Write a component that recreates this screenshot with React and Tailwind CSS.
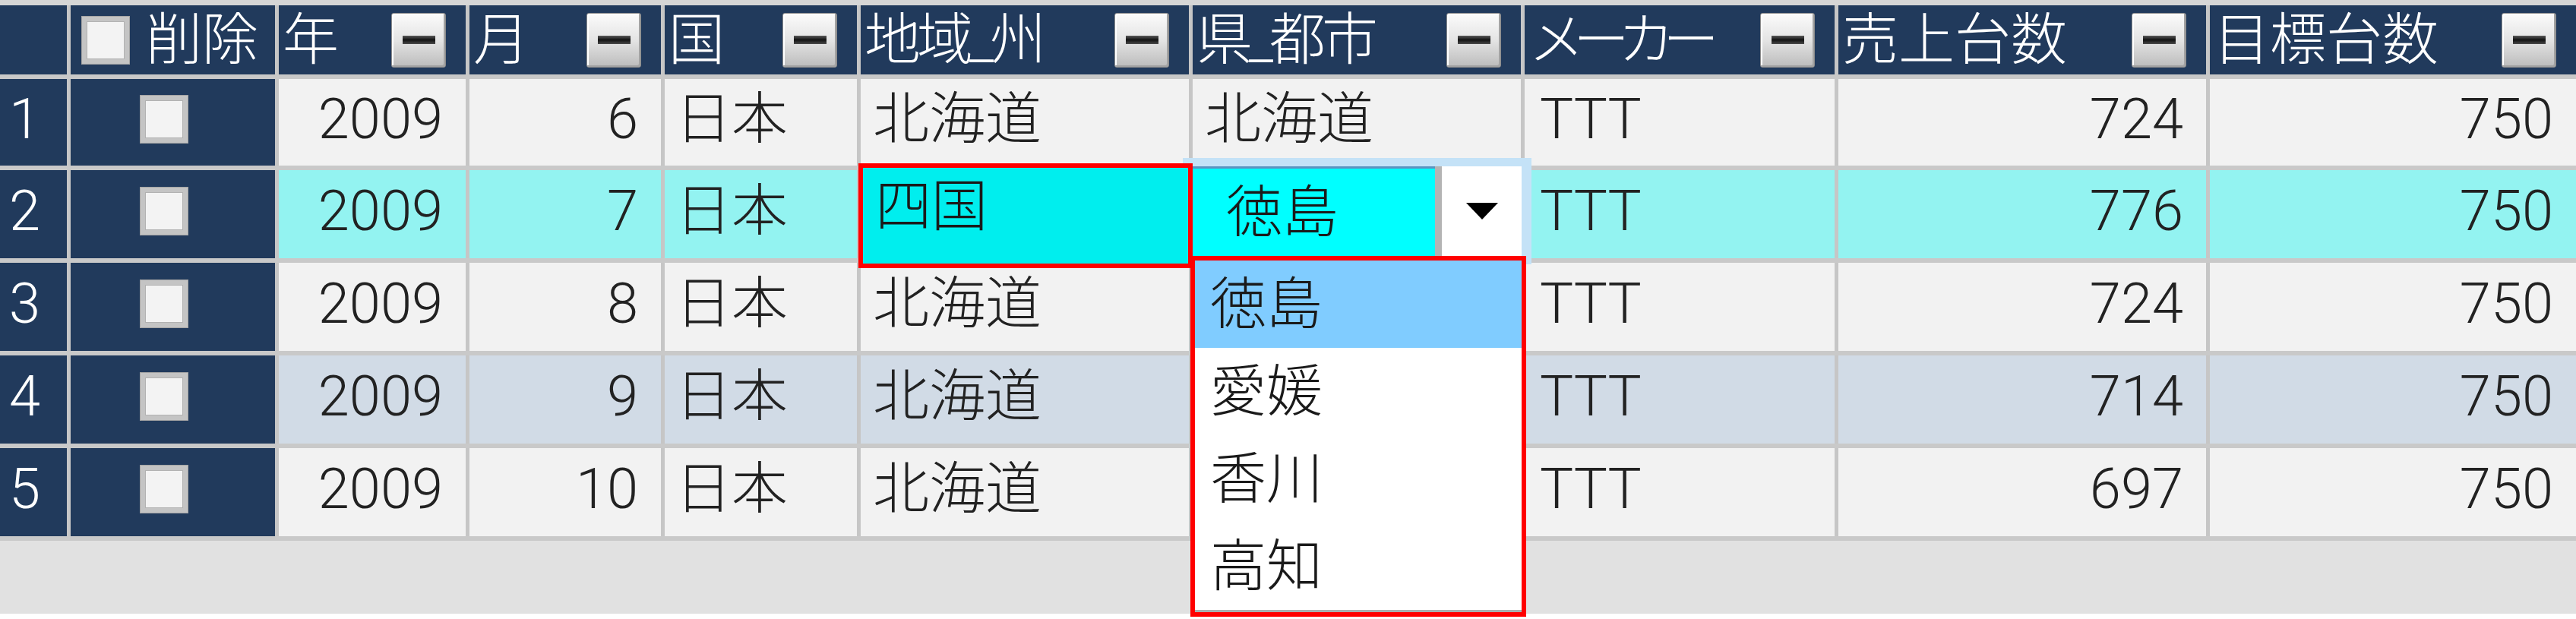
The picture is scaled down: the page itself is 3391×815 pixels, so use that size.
const W = [
  "w-[93px]",
  "w-[274px]",
  "w-[251px]",
  "w-[257px]",
  "w-[258px]",
  "w-[437px]",
  "w-[437px]",
  "w-[413px]",
  "w-[489px]",
  "flex-1",
];

const rows = [
  { n: 1, m: 6, region: "北海道", city: "北海道", sales: 724, bg: "bg-[#f2f2f2]", h: "h-[120px]" },
  { n: 2, m: 7, region: "", city: "", sales: 776, bg: "bg-[#93f3f1]", h: "h-[122px]", editing: true },
  { n: 3, m: 8, region: "北海道", city: "", sales: 724, bg: "bg-[#f2f2f2]", h: "h-[122px]" },
  { n: 4, m: 9, region: "北海道", city: "", sales: 714, bg: "bg-[#d1dbe6]", h: "h-[122px]" },
  { n: 5, m: 10, region: "北海道", city: "", sales: 697, bg: "bg-[#f2f2f2]", h: "h-[122px]" },
];

const headers = ["年", "月", "国", "地域_州", "県_都市", "メーカー", "売上台数", "目標台数"];

const options = ["徳島", "愛媛", "香川", "高知"];

function Checkbox() {
  return (
    <div className="w-[62px] h-[62px] shrink-0 bg-[#f3f3f3] border-[6px] border-[#c4c4c4] shadow-[0_0_0_1px_#a4a4a4,inset_0_0_0_1px_#b2b2b2]" />
  );
}

function FilterButton() {
  return (
    <div className="w-[72px] h-[72px] shrink-0 rounded-[3px] border border-[#8c8c8c] bg-linear-to-b from-[#fbfbfb] via-[#e4e4e4] to-[#bcbcbc] shadow-[inset_-2px_-2px_0_#a3a3a3,inset_2px_2px_0_#ffffff] flex items-center justify-center">
      <div className="w-[43px] h-[11px] bg-linear-to-b from-[#5a5a5a] via-[#141414] to-[#4a4a4a]" />
    </div>
  );
}

function HeaderCell({ w, label, last }) {
  return (
    <div
      className={`${w} h-full flex items-center justify-between pl-[5px] pr-[26px] ${last ? "" : "border-r-[5px] border-[#c6c6c6]"}`}
    >
      <span className={label === "メーカー" ? "tracking-[-15px]" : label.includes("_") ? "tracking-[-5px]" : ""}>
        {label}
      </span>
      <FilterButton />
    </div>
  );
}

function Cell({ w, align = "left", last, children, extra = "" }) {
  return (
    <div
      className={`${w} h-full flex items-center pb-[8px] ${align === "right" ? "justify-end pr-[30px]" : "justify-start pl-[16px]"} ${last ? "" : "border-r-[5px] border-[#c6c6c6]"} ${extra}`}
    >
      {children}
    </div>
  );
}

function RegionEditor() {
  return (
    <div className="absolute left-[-3px] top-[-9px] w-[440px] h-[138px] border-[6px] border-[#ff0000] bg-[#00eeee] z-20 pl-[16px] pt-[14px] leading-none text-[#1a1a1a]">
      四国
    </div>
  );
}

function CityEditor() {
  return (
    <>
      <div className="absolute left-[-13px] top-[-16px] w-[459px] h-[140px] bg-[#c4e2f7] z-10 p-[11px_13px] flex">
        <div className="w-[319px] h-full bg-[#00ffff] border-t-[3px] border-[#5c93c0] flex items-center pl-[44px] leading-none text-[#1a1a1a]">
          徳島
        </div>
        <div className="w-[9px] h-full bg-[#b4b4b4]" />
        <div className="flex-1 h-full bg-white flex items-center justify-center">
          <svg width="42" height="22" viewBox="0 0 42 22">
            <polygon points="0,0 42,0 21,22" fill="#000" />
          </svg>
        </div>
      </div>
      <div className="absolute left-[-3px] top-[113px] w-[442px] border-[6px] border-[#ff0000] bg-white z-30 leading-none text-[#1a1a1a]">
        <div className="border-b-[3px] border-[#a9b1b1]">
          {options.map((o, i) => (
            <div
              key={o}
              className={`h-[115px] flex items-center pl-[20px] ${i === 0 ? "bg-[#80ccff]" : "bg-white"}`}
            >
              {o}
            </div>
          ))}
        </div>
      </div>
    </>
  );
}

export default function App() {
  return (
    <div className="w-[3391px] h-[815px] bg-white font-['Roboto','Noto_Sans_CJK_JP',sans-serif] font-light text-[74px] leading-none text-[#222]">
      <div className="h-[808px] bg-[#e1e1e1] flex flex-col">
        <div className="h-[7px] bg-[#d6d6d6]" />

        <div className="h-[97px] flex bg-[#213a5c] text-white border-b-[6px] border-[#c8c8c8]">
          <div className={`${W[0]} h-full border-r-[5px] border-[#c6c6c6]`} />
          <div className={`${W[1]} h-full flex items-center pl-[15px] gap-[22px] border-r-[5px] border-[#c6c6c6]`}>
            <Checkbox />
            <span>削除</span>
          </div>
          {headers.map((h, i) => (
            <HeaderCell key={h} w={W[i + 2]} label={h} last={i === headers.length - 1} />
          ))}
        </div>

        {rows.map((r) => (
          <div key={r.n} className={`flex ${r.h} border-b-[6px] border-[#c9c9c9] ${r.bg}`}>
            <Cell w={W[0]} extra="bg-[#213a5c] text-white !pl-[12px]">
              {r.n}
            </Cell>
            <div className={`${W[1]} h-full flex items-center justify-center pr-[24px] pb-[8px] bg-[#213a5c] border-r-[5px] border-[#c6c6c6]`}>
              <Checkbox />
            </div>
            <Cell w={W[2]} align="right">2009</Cell>
            <Cell w={W[3]} align="right">{r.m}</Cell>
            <Cell w={W[4]} extra="!pl-[14px]">日本</Cell>
            <Cell w={W[5]} extra={r.editing ? "relative" : ""}>
              {r.editing ? <RegionEditor /> : r.region}
            </Cell>
            <Cell w={W[6]} extra={r.editing ? "relative" : ""}>
              {r.editing ? <CityEditor /> : r.city}
            </Cell>
            <Cell w={W[7]} extra="!pl-[20px]">TTT</Cell>
            <Cell w={W[8]} align="right">{r.sales}</Cell>
            <Cell w={W[9]} align="right" last>750</Cell>
          </div>
        ))}

        <div className="flex-1" />
      </div>
    </div>
  );
}
